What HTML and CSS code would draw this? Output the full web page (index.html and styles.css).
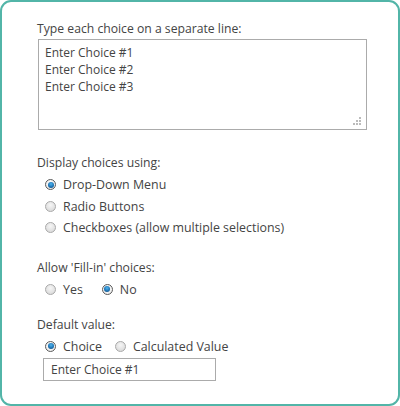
FILE: index.html
```html
<!DOCTYPE html>
<html>
<head>
<meta charset="utf-8">
<link rel="stylesheet" href="styles.css">
</head>
<body>
<div class="panel">
  <div class="label first">Type each choice on a separate line:</div>
  <div class="textarea">
    <div>Enter Choice #1</div>
    <div>Enter Choice #2</div>
    <div>Enter Choice #3</div>
    <span class="grip"><i></i><i></i><i></i><i></i><i></i><i></i></span>
  </div>

  <div class="label sec2">Display choices using:</div>
  <div class="opts">
    <div class="opt"><span class="radio on"></span>Drop-Down Menu</div>
    <div class="opt"><span class="radio"></span>Radio Buttons</div>
    <div class="opt"><span class="radio"></span>Checkboxes (allow multiple selections)</div>
  </div>

  <div class="label sec3">Allow 'Fill-in' choices:</div>
  <div class="inline">
    <div class="opt yes"><span class="radio"></span>Yes</div>
    <div class="opt"><span class="radio on"></span>No</div>
  </div>

  <div class="label sec4">Default value:</div>
  <div class="inline">
    <div class="opt choice"><span class="radio on"></span>Choice</div>
    <div class="opt"><span class="radio"></span>Calculated Value</div>
  </div>
  <div class="input">Enter Choice #1</div>
</div>
</body>
</html>
```

FILE: styles.css
```css
html, body {
  margin: 0;
  padding: 0;
  background: #fff;
}
body {
  font-family: "Open Sans", "Noto Sans", sans-serif;
  font-size: 12px;
  color: #444;
}
.panel {
  width: 400px;
  height: 406px;
  box-sizing: border-box;
  border: 2px solid #52b5a8;
  border-radius: 11px;
  padding: 18px 0 0 35px;
}
.label {
  line-height: 17px;
  height: 17px;
  white-space: nowrap;
  font-size: 12.2px;
}
.textarea {
  position: relative;
  margin-top: 2px;
  margin-left: 1px;
  width: 329px;
  height: 91px;
  box-sizing: border-box;
  border: 1px solid #ababab;
  padding: 4px 0 0 6px;
  line-height: 17px;
}
.grip {
  position: absolute;
  right: 5px;
  bottom: 4px;
  width: 8px;
  height: 8px;
}
.grip i {
  position: absolute;
  width: 2px;
  height: 2px;
  background: #bbb;
}
.grip i:nth-child(1) { right: 0; top: 0; }
.grip i:nth-child(2) { right: 0; top: 3px; }
.grip i:nth-child(3) { right: 3px; top: 3px; }
.grip i:nth-child(4) { right: 0; top: 6px; }
.grip i:nth-child(5) { right: 3px; top: 6px; }
.grip i:nth-child(6) { right: 6px; top: 6px; }
.sec2 { margin-top: 24px; }
.sec3 { margin-top: 20px; }
.sec4 { margin-top: 16px; }
.opts {
  margin-top: 3px;
  padding-left: 8px;
}
.opt {
  display: flex;
  align-items: center;
  height: 21.5px;
  line-height: 17px;
  font-size: 12.4px;
  white-space: nowrap;
}
.inline {
  display: flex;
  margin-top: 3px;
  padding-left: 8px;
}
.inline .opt { height: 21px; }
.yes { margin-right: 19px; }
.choice { margin-right: 13px; }
.radio {
  flex: none;
  width: 11px;
  height: 11px;
  box-sizing: border-box;
  border-radius: 50%;
  border: 1px solid #a9a9a9;
  background: radial-gradient(circle at 50% 35%, #f6f6f6 0%, #dedede 70%, #cfcfcf 100%);
  margin-right: 7px;
  position: relative;
}
.radio.on {
  border-color: #5a5a5a;
  background: radial-gradient(circle at 50% 40%, #fff 0%, #e6e6e6 100%);
}
.radio.on::after {
  content: "";
  position: absolute;
  left: 1.5px;
  top: 1.5px;
  width: 6px;
  height: 6px;
  border-radius: 50%;
  background: radial-gradient(circle at 50% 35%, #4fb4ee 0%, #1a6fb0 60%, #0d3f6a 100%);
}
.input {
  margin-top: 1px;
  margin-left: 6px;
  width: 173px;
  height: 23px;
  box-sizing: border-box;
  border: 1px solid #ababab;
  padding: 2px 0 0 7px;
  line-height: 17px;
}
```
